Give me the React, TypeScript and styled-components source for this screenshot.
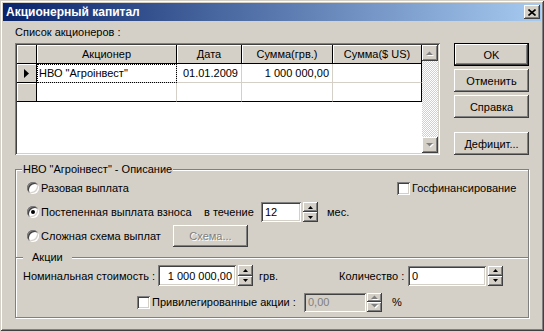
import React from "react"
import styled, { createGlobalStyle, css } from "styled-components"

const face = "#D4D0C8"
const shadow = "#808080"
const dark = "#404040"

const GlobalStyle = createGlobalStyle`
  html, body {
    margin: 0;
    padding: 0;
    background: ${face};
  }
  body {
    font-family: "Liberation Sans", Arial, sans-serif;
    font-size: 11px;
    color: #000;
  }
  * {
    box-sizing: border-box;
  }
`

const raised = css`
  background: ${face};
  box-shadow: inset -1px -1px ${dark}, inset 1px 1px #fff, inset -2px -2px ${shadow}, inset 2px 2px ${face};
`

const sunken = css`
  box-shadow: inset 1px 1px ${shadow}, inset -1px -1px #fff, inset 2px 2px ${dark}, inset -2px -2px ${face};
`

const Window = styled.div`
  width: 544px;
  height: 331px;
  padding: 3px;
  display: flex;
  flex-direction: column;
  background: ${face};
  box-shadow: inset 1px 1px ${face}, inset -1px -1px ${dark}, inset 2px 2px #fff, inset -2px -2px ${shadow};
`

const TitleBar = styled.div`
  height: 18px;
  flex: none;
  display: flex;
  align-items: center;
  justify-content: space-between;
  padding: 0 1px 0 3px;
  background: linear-gradient(to right, #0a246a, #a6caf0);
  color: #fff;
  font-weight: bold;
  font-size: 12px;
`

const CloseButton = styled.div`
  width: 16px;
  height: 14px;
  display: flex;
  align-items: center;
  justify-content: center;
  ${raised};
`

const Body = styled.div`
  flex: 1;
  padding: 0 12px;
  display: flex;
  flex-direction: column;
`

const Top = styled.div`
  display: flex;
  justify-content: space-between;
`

const LeftCol = styled.div`
  width: 425px;
  display: flex;
  flex-direction: column;
`

const Caption = styled.div`
  height: 13px;
  line-height: 13px;
  margin-top: 5px;
  margin-bottom: 4px;
`

const GridFrame = styled.div`
  width: 425px;
  height: 112px;
  padding: 2px;
  display: flex;
  background: #fff;
  ${sunken};
`

const Table = styled.div`
  width: 405px;
  display: grid;
  grid-template-columns: 20px 140px 65px 91px 89px;
  grid-auto-rows: 19px;
  align-content: start;
`

const HeadCell = styled.div`
  background: ${face};
  border-right: 1px solid #000;
  border-bottom: 1px solid #000;
  box-shadow: inset 1px 1px #fff;
  line-height: 18px;
  white-space: nowrap;
  overflow: hidden;
  display: flex;
  align-items: center;
  justify-content: center;
`

const Cell = styled.div<{ $align?: string; $lastCol?: boolean; $lastRow?: boolean; $focus?: boolean }>`
  background: #fff;
  border-right: 1px solid ${(p) => (p.$lastCol ? "#000" : face)};
  border-bottom: 1px solid ${(p) => (p.$lastRow ? "#000" : face)};
  text-align: ${(p) => p.$align || "left"};
  padding: 0 3px 0 2px;
  line-height: 18px;
  white-space: nowrap;
  overflow: hidden;
  ${(p) =>
    p.$focus &&
    css`
      outline: 1px dotted #000;
      outline-offset: -1px;
    `}
`

const ScrollBar = styled.div`
  width: 16px;
  display: flex;
  flex-direction: column;
`

const ScrollButton = styled.div`
  width: 16px;
  height: 16px;
  flex: none;
  display: flex;
  align-items: center;
  justify-content: center;
  ${raised};
`

const ScrollTrack = styled.div`
  flex: 1;
  background-color: ${face};
  background-image: repeating-conic-gradient(#fff 0 25%, ${face} 0 50%);
  background-size: 2px 2px;
`

const RightCol = styled.div`
  width: 75px;
  padding-top: 22px;
  display: flex;
  flex-direction: column;
`

const Button = styled.div<{ $h?: number; $default?: boolean; $disabled?: boolean; $mt?: number }>`
  width: 75px;
  height: ${(p) => p.$h || 23}px;
  margin-top: ${(p) => p.$mt || 0}px;
  display: flex;
  align-items: center;
  justify-content: center;
  ${raised};
  ${(p) =>
    p.$default &&
    css`
      border: 1px solid #000;
    `}
  color: ${(p) => (p.$disabled ? shadow : "#000")};
  text-shadow: ${(p) => (p.$disabled ? "1px 1px #fff" : "none")};
`

const GroupBox = styled.div`
  position: relative;
  margin-top: 14px;
  height: 149px;
  border: 1px solid ${shadow};
  box-shadow: inset 1px 1px #fff, 1px 1px #fff;
  padding-top: 10px;
`

const Legend = styled.span<{ $left: number; $pad: number }>`
  position: absolute;
  top: -7px;
  left: ${(p) => p.$left}px;
  padding: 0 ${(p) => p.$pad}px;
  background: ${face};
  line-height: 13px;
`

const Divider = styled.div<{ $mt: number }>`
  position: relative;
  margin-top: ${(p) => p.$mt}px;
  height: 2px;
  border-top: 1px solid ${shadow};
  border-bottom: 1px solid #fff;
`

const Row = styled.div<{ $h: number; $mt?: number; $pl?: number }>`
  height: ${(p) => p.$h}px;
  margin-top: ${(p) => p.$mt || 0}px;
  padding-left: ${(p) => p.$pl ?? 11}px;
  display: flex;
  align-items: center;
  white-space: nowrap;
`

const Slot = styled.div<{ $w?: number; $ml?: number }>`
  width: ${(p) => (p.$w ? `${p.$w}px` : "auto")};
  margin-left: ${(p) => p.$ml || 0}px;
  flex: none;
  display: flex;
  align-items: center;
`

const Radio = styled.span<{ $checked?: boolean }>`
  width: 12px;
  height: 12px;
  margin-right: 2px;
  border-radius: 50%;
  background: #fff;
  flex: none;
  display: flex;
  align-items: center;
  justify-content: center;
  box-shadow: inset 1px 1px 0 ${shadow}, inset -1px -1px 0 #fff, inset 2px 2px 0 ${dark}, inset -2px -2px 0 ${face};
  &::after {
    content: "";
    width: 4px;
    height: 4px;
    border-radius: 50%;
    background: ${(p) => (p.$checked ? "#000" : "transparent")};
  }
`

const CheckBox = styled.span`
  width: 13px;
  height: 13px;
  margin-right: 2px;
  flex: none;
  background: #fff;
  ${sunken};
`

const Edit = styled.div<{ $w: number; $h?: number; $right?: boolean; $disabled?: boolean }>`
  width: ${(p) => p.$w}px;
  height: ${(p) => p.$h || 20}px;
  flex: none;
  padding: 0 4px;
  display: flex;
  align-items: center;
  justify-content: ${(p) => (p.$right ? "flex-end" : "flex-start")};
  background: ${(p) => (p.$disabled ? face : "#fff")};
  color: ${(p) => (p.$disabled ? shadow : "#000")};
  ${sunken};
`

const SpinBox = styled.div<{ $h?: number; $ml?: number }>`
  width: 15px;
  height: ${(p) => p.$h || 20}px;
  margin-left: ${(p) => p.$ml ?? 2}px;
  flex: none;
  display: flex;
  flex-direction: column;
`

const SpinHalf = styled.div`
  flex: 1;
  display: flex;
  align-items: center;
  justify-content: center;
  ${raised};
`

const Text = styled.span<{ $ml?: number }>`
  margin-left: ${(p) => p.$ml || 0}px;
`

function Arrow({ dir, w = 7, h = 4 }: { dir: "up" | "down" | "right"; w?: number; h?: number }) {
  const pts =
    dir === "up"
      ? `0,${h} ${w / 2},0 ${w},${h}`
      : dir === "down"
      ? `0,0 ${w},0 ${w / 2},${h}`
      : `0,0 ${w},${h / 2} 0,${h}`
  return (
    <svg width={w} height={h} viewBox={`0 0 ${w} ${h}`} style={{ display: "block" }}>
      <polygon points={pts} fill="#000" />
    </svg>
  )
}

function GrayArrow({ dir }: { dir: "up" | "down" }) {
  return (
    <svg width={8} height={5} viewBox="0 0 8 5" style={{ display: "block" }}>
      <polygon points={dir === "up" ? "1,5 4.5,1.5 8,5" : "1,1 8,1 4.5,4.5"} fill="#fff" />
      <polygon points={dir === "up" ? "0,4 3.5,0.5 7,4" : "0,0 7,0 3.5,3.5"} fill={shadow} />
    </svg>
  )
}

function Spinner({ h, ml, disabled }: { h?: number; ml?: number; disabled?: boolean }) {
  return (
    <SpinBox $h={h} $ml={ml}>
      <SpinHalf>{disabled ? <GrayArrow dir="up" /> : <Arrow dir="up" w={5} h={3} />}</SpinHalf>
      <SpinHalf>{disabled ? <GrayArrow dir="down" /> : <Arrow dir="down" w={5} h={3} />}</SpinHalf>
    </SpinBox>
  )
}

export default function App() {
  return (
    <>
      <GlobalStyle />
      <Window>
        <TitleBar>
          <span>Акционерный капитал</span>
          <CloseButton>
            <svg width="8" height="7" viewBox="0 0 8 7">
              <path d="M0.5 0.5 L7.5 6.5 M7.5 0.5 L0.5 6.5" stroke="#000" strokeWidth="1.6" />
            </svg>
          </CloseButton>
        </TitleBar>
        <Body>
          <Top>
            <LeftCol>
              <Caption>Список акционеров :</Caption>
              <GridFrame>
                <Table>
                  <HeadCell />
                  <HeadCell>Акционер</HeadCell>
                  <HeadCell>Дата</HeadCell>
                  <HeadCell>Сумма(грв.)</HeadCell>
                  <HeadCell>Сумма($ US)</HeadCell>

                  <HeadCell>
                    <Arrow dir="right" w={5} h={9} />
                  </HeadCell>
                  <Cell $focus>НВО "Агроінвест"</Cell>
                  <Cell $align="right">01.01.2009</Cell>
                  <Cell $align="right">1 000 000,00</Cell>
                  <Cell $lastCol />

                  <HeadCell />
                  <Cell $lastRow />
                  <Cell $lastRow />
                  <Cell $lastRow />
                  <Cell $lastRow $lastCol />
                </Table>
                <ScrollBar>
                  <ScrollButton>
                    <GrayArrow dir="up" />
                  </ScrollButton>
                  <ScrollTrack />
                  <ScrollButton>
                    <GrayArrow dir="down" />
                  </ScrollButton>
                </ScrollBar>
              </GridFrame>
            </LeftCol>
            <RightCol>
              <Button $default>OK</Button>
              <Button $mt={3}>Отменить</Button>
              <Button $mt={3}>Справка</Button>
              <Button $mt={14}>Дефицит...</Button>
            </RightCol>
          </Top>

          <GroupBox>
            <Legend $left={6} $pad={1}>НВО "Агроінвест" - Описание</Legend>
            <Row $h={16}>
              <Slot $w={370}>
                <Radio />
                Разовая выплата
              </Slot>
              <Slot>
                <CheckBox />
                Госфинансирование
              </Slot>
            </Row>
            <Row $h={22} $mt={5}>
              <Slot $w={177}>
                <Radio $checked />
                Постепенная выплата взноса
              </Slot>
              <Slot $w={57}>в течение</Slot>
              <Edit $w={40}>12</Edit>
              <Spinner />
              <Text $ml={9}>мес.</Text>
            </Row>
            <Row $h={22} $mt={2}>
              <Slot $w={146}>
                <Radio />
                Сложная схема выплат
              </Slot>
              <Button $h={22} $disabled>
                Схема...
              </Button>
            </Row>

            <Divider $mt={10}>
              <Legend $left={7} $pad={9}>Акции</Legend>
            </Divider>

            <Row $h={23} $mt={5} $pl={7}>
              <Slot $w={135}>Номинальная стоимость :</Slot>
              <Edit $w={78} $h={21} $right>
                1 000 000,00
              </Edit>
              <Spinner h={21} />
              <Text $ml={6}>грв.</Text>
              <Slot $ml={61} $w={69}>
                Количество :
              </Slot>
              <Edit $w={78}>0</Edit>
              <Spinner />
            </Row>
            <Row $h={20} $mt={5} $pl={121}>
              <Slot $w={167}>
                <CheckBox />
                Привилегированные акции :
              </Slot>
              <Edit $w={62} $h={19} $disabled>
                0,00
              </Edit>
              <Spinner h={19} ml={1} disabled />
              <Text $ml={10}>%</Text>
            </Row>
          </GroupBox>
        </Body>
      </Window>
    </>
  )
}
